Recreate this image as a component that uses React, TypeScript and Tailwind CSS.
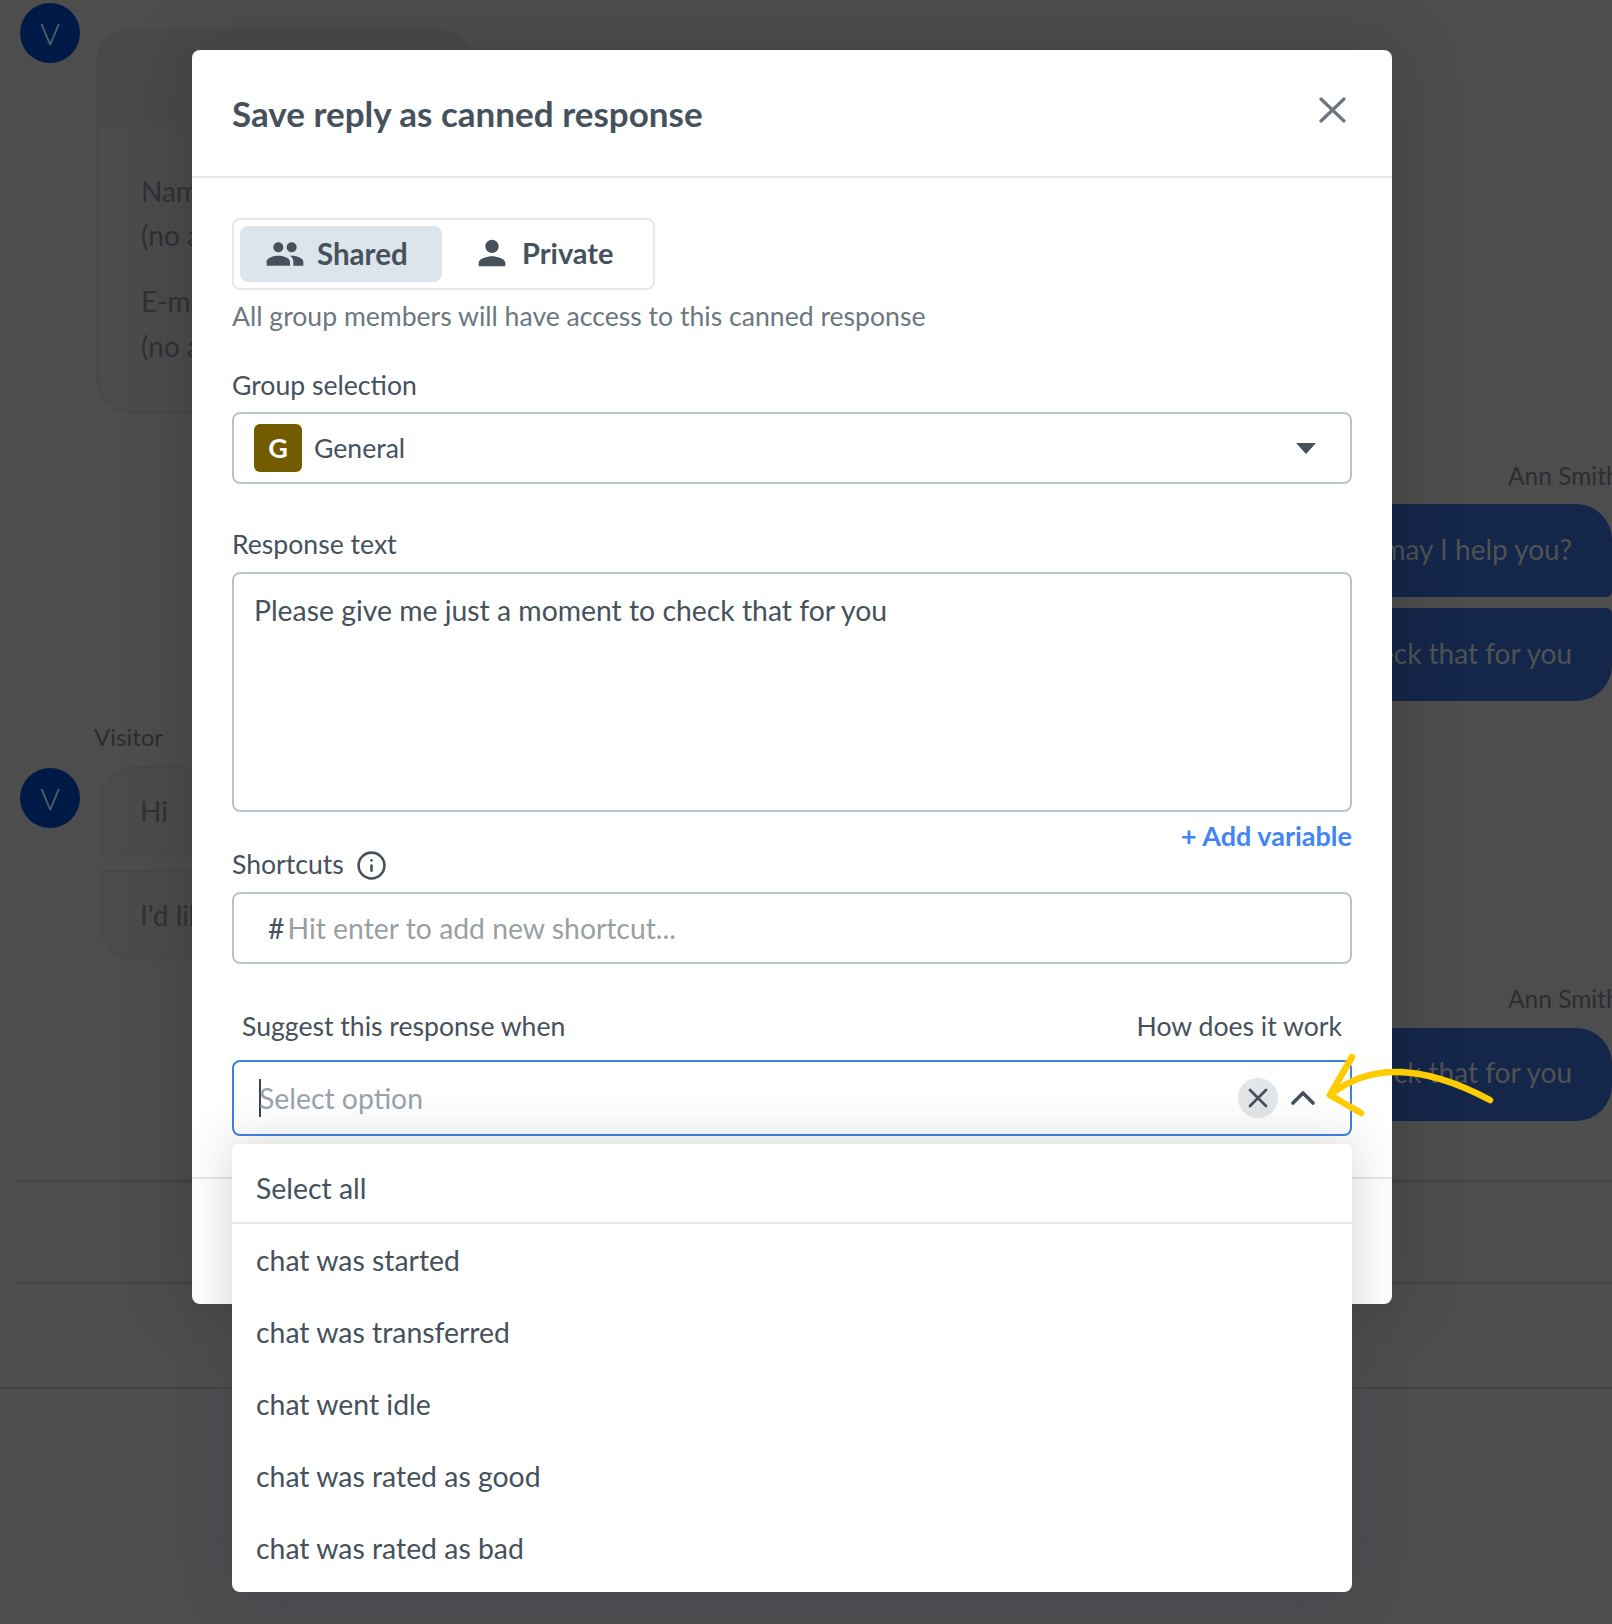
import { Info } from "lucide-react"
import { MdPeople, MdPerson } from "react-icons/md"

const options = ["chat was started", "chat was transferred", "chat went idle", "chat was rated as good", "chat was rated as bad"]

function Avatar() {
  return (
    <div className="w-[60px] h-[60px] shrink-0 rounded-full bg-[#001a47] flex items-center justify-center text-[30px] font-light text-[#5d6672]">
      V
    </div>
  )
}

function Backdrop() {
  return (
    <div className="flex flex-col w-full text-[#2f3136] text-[28px]">
      <div className="flex items-start pl-5">
        <div className="mt-[3px]">
          <Avatar />
        </div>
        <div className="ml-4 mt-[29px] w-[377px] h-[384px] rounded-[36px] border-2 border-[#484848] bg-[#4b4b4b] overflow-hidden">
          <div className="h-[94px] bg-[#494949]" />
          <div className="pl-[43px] pt-[46px]">
            <div className="h-[42px] leading-[40px]">Name</div>
            <div className="h-[66px] leading-[45px]">(no a</div>
            <div className="h-[45px] leading-[45px]">E-mail</div>
            <div className="leading-[45px]">(no a</div>
          </div>
        </div>
      </div>
      <div className="ml-[1508px] mt-[45px] h-[36px] leading-[36px] whitespace-nowrap text-[24.5px] text-[#2c2d31]">Ann Smith</div>
      <div className="self-end mt-[10px] h-[93px] flex items-center pl-[40px] pr-10 pb-[4px] bg-[#14264a] rounded-l-[36px] rounded-tr-[36px] rounded-br-[6px] text-[#4f5254] whitespace-nowrap">
        Hi, how may I help you?
      </div>
      <div className="self-end mt-[11px] h-[93px] flex items-center pl-[40px] pr-10 pb-[4px] bg-[#14264a] rounded-l-[36px] rounded-tr-[6px] rounded-br-[36px] text-[#4f5254] whitespace-nowrap">
        Please give me just a moment to check that for you
      </div>
      <div className="ml-[94px] mt-[20px] h-[32px] leading-[32px] text-[24px] text-[#2c2d31]">Visitor</div>
      <div className="flex items-start pl-5 mt-[13px]">
        <div className="mt-[2px]">
          <Avatar />
        </div>
        <div className="ml-5 flex flex-col gap-[13px]">
          <div className="w-fit h-[91px] flex items-center pl-[38px] pr-[41px] pb-[2px] rounded-tl-[36px] rounded-tr-[36px] rounded-br-[36px] rounded-bl-[6px] border-2 border-[#484848] bg-[#4b4b4b]">
            Hi
          </div>
          <div className="w-fit h-[91px] flex items-center pl-[38px] pr-[41px] pb-[2px] rounded-tl-[6px] rounded-tr-[36px] rounded-b-[36px] border-2 border-[#484848] bg-[#4b4b4b]">
            I'd like to ask about pricing
          </div>
        </div>
      </div>
      <div className="ml-[1508px] mt-[20px] h-[36px] leading-[36px] whitespace-nowrap text-[24.5px] text-[#2c2d31]">Ann Smith</div>
      <div className="self-end mt-[11px] h-[93px] flex items-center pl-[40px] pr-10 pb-[5px] bg-[#14264a] rounded-[36px] text-[#4f5254] whitespace-nowrap">
        Please give me just a moment to check that for you
      </div>
      <div className="ml-[18px] mt-[59px] h-[102px] border-t-2 border-[#424242]" />
      <div className="ml-[18px] h-[105px] border-t-2 border-[#424242]" />
      <div className="border-t-2 border-[#424242] h-[236px] bg-[#4c4d4f]" />
    </div>
  )
}

function Dropdown() {
  return (
    <div className="absolute left-0 top-full mt-[8px] w-[1120px] h-[448px] bg-white rounded-lg shadow-[0_0_50px_rgba(40,50,60,0.22)] z-10 text-[#46515c] text-[28.4px]">
      <div className="h-[80px] flex items-start pl-6 pt-[25px] leading-[38px] border-b-2 border-[#e4e8ec]">Select all</div>
      <div className="flex flex-col">
        {options.map((o) => (
          <div key={o} className="h-[72px] flex items-center pl-6">
            {o}
          </div>
        ))}
      </div>
    </div>
  )
}

function Modal() {
  return (
    <div className="absolute left-[192px] top-[50px] w-[1200px] h-[1254px] bg-white rounded-lg shadow-[0_0_70px_rgba(0,0,0,0.18)] flex flex-col text-[#46515c]">
      <div className="h-[128px] shrink-0 border-b-2 border-[#e4e8ec] flex items-start justify-between pl-10 pr-[46px]">
        <h2 className="mt-[41px] text-[35px] leading-[44px] font-bold">Save reply as canned response</h2>
        <svg className="mt-[47px] w-[27px] h-[26px]" viewBox="0 0 27 26" fill="none" stroke="#6b7780" strokeWidth="3.2" strokeLinecap="round">
          <path d="M2 2L25 24M25 2L2 24" />
        </svg>
      </div>
      <div className="flex flex-col px-10 text-[26.6px]">
        <div className="mt-10 w-[423px] h-[72px] border-2 border-[#e4e8ec] rounded-lg flex items-center gap-[6px] pl-[6px]">
          <div className="w-[202px] h-[56px] bg-[#dbe5ec] rounded-lg flex items-center pl-[25px] gap-[12px] font-bold text-[29.5px]">
            <MdPeople size={40} />
            Shared
          </div>
          <div className="w-[196px] h-[56px] flex items-center pl-[24px] gap-[10px] pb-[2px] font-bold text-[29px]">
            <MdPerson size={40} />
            Private
          </div>
        </div>
        <p className="mt-[9px] h-[34px] leading-[34px] text-[#6c7780]">All group members will have access to this canned response</p>
        <label className="mt-[35px] h-[34px] leading-[34px]">Group selection</label>
        <div className="mt-[10px] h-[72px] border-2 border-[#b9c5d0] rounded-lg flex items-center pl-5 pr-[34px]">
          <div className="w-12 h-12 rounded-md bg-[#735c00] flex items-center justify-center text-white font-bold text-[27px]">G</div>
          <span className="ml-3 pt-[2px]">General</span>
          <svg className="ml-auto w-5 h-[11px]" viewBox="0 0 20 11" fill="#46515c">
            <path d="M0 0H20L10 11Z" />
          </svg>
        </div>
        <label className="mt-[43px] h-[34px] leading-[34px]">Response text</label>
        <div className="mt-[11px] h-[240px] border-2 border-[#b9c5d0] rounded-lg pl-5 pt-[18px] text-[28.35px] leading-[36px]">
          Please give me just a moment to check that for you
        </div>
        <div className="mt-[7px] h-[34px] leading-[34px] text-right text-[27px] text-[#4285f4] font-bold">+ Add variable</div>
        <div className="-mt-[5px] h-[34px] flex items-center gap-[12px]">
          <span>Shortcuts</span>
          <Info size={31} strokeWidth={2} />
        </div>
        <div className="mt-[10px] h-[72px] border-2 border-[#b9c5d0] rounded-lg flex items-center pl-[34px] text-[28.35px]">
          <span className="text-[#46515c] mr-[3px]">#</span>
          <span className="text-[#9a9fa3]">Hit enter to add new shortcut...</span>
        </div>
        <div className="mt-[45px] h-[34px] flex justify-between px-[10px] leading-[34px]">
          <span>Suggest this response when</span>
          <span>How does it work</span>
        </div>
        <div className="relative mt-[17px]">
          <div className="h-[76px] border-2 border-[#3f7fe8] rounded-lg flex items-center pl-[25px] pr-[35px] text-[28.35px]">
            <div className="w-[2px] h-[38px] bg-[#3a4550]" />
            <span className="text-[#9aa3ab] -ml-[2px]">Select option</span>
            <div className="ml-auto w-10 h-10 rounded-full bg-[#e2e6e9] flex items-center justify-center">
              <svg className="w-5 h-5" viewBox="0 0 20 20" fill="none" stroke="#46515c" strokeWidth="2.8" strokeLinecap="round">
                <path d="M2 2L18 18M18 2L2 18" />
              </svg>
            </div>
            <svg className="ml-[13px] w-[24px] h-[14px]" viewBox="0 0 24 14" fill="none" stroke="#46515c" strokeWidth="3.6" strokeLinecap="round" strokeLinejoin="round">
              <path d="M2 12L12 2L22 12" />
            </svg>
          </div>
          <Dropdown />
        </div>
        <div className="absolute left-0 right-0 top-[1127px] border-t-2 border-[#e4e8ec]" />
      </div>
    </div>
  )
}

export default function App() {
  return (
    <div className="relative w-[1612px] h-[1624px] overflow-hidden bg-[#4d4d4d] font-[Lato,sans-serif]">
      <Backdrop />
      <Modal />
      <svg className="absolute left-[1320px] top-[1050px] w-[180px] h-[75px] z-20" viewBox="0 0 180 75" fill="none" stroke="#ffcc00" strokeWidth="6.5" strokeLinecap="round" strokeLinejoin="round">
        <path d="M32 7L10 45L41 63" />
        <path d="M10 45Q70 -3.5 170 50" />
      </svg>
    </div>
  )
}
